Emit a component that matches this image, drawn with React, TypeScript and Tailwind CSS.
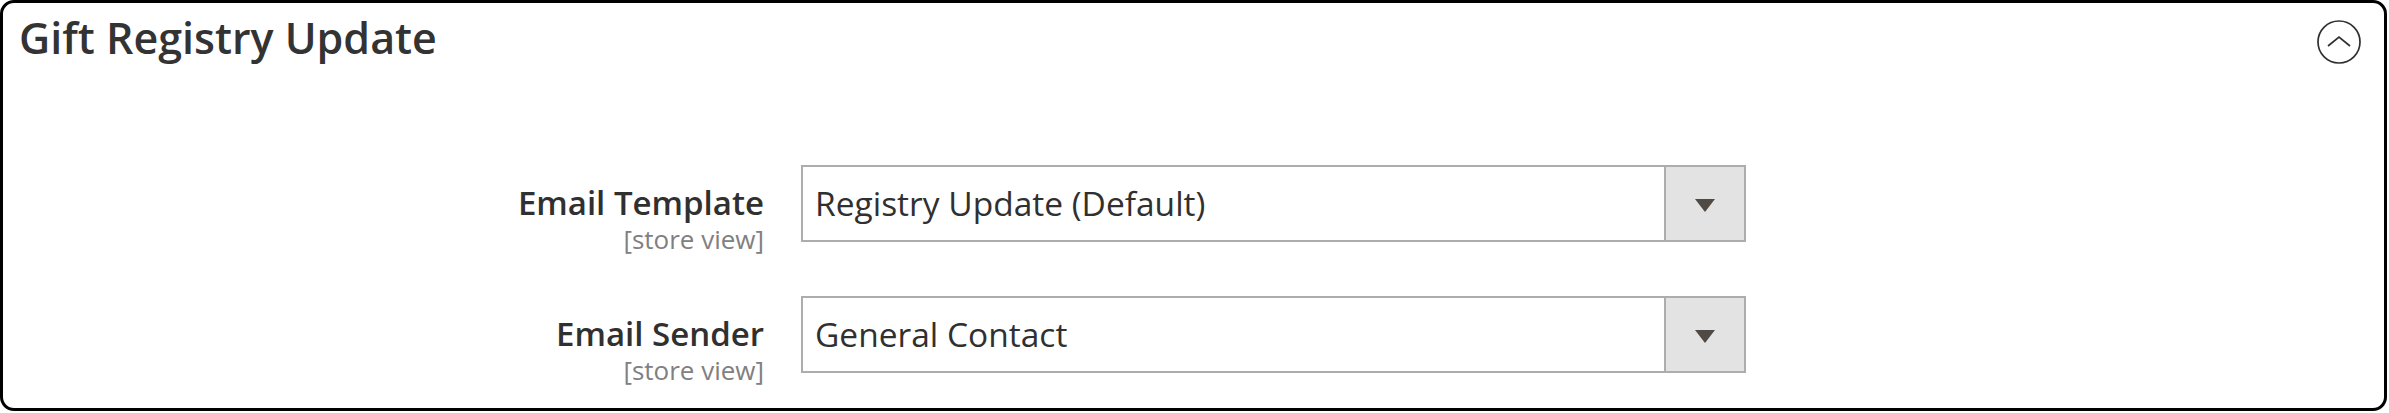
import React from 'react';

const rows = [
  { label: 'Email Template', value: 'Registry Update (Default)' },
  { label: 'Email Sender', value: 'General Contact' },
];

function SelectBox({ value }: { value: string }) {
  return (
    <div className="flex h-[77px] w-[945px] border-2 border-[#adadad] bg-white">
      <div className="flex flex-1 items-center pl-[12px] text-[33.5px] text-[#303030]">{value}</div>
      <div className="flex w-[80px] items-center justify-center border-l-2 border-[#adadad] bg-[#e3e3e3]">
        <svg width="20" height="13" viewBox="0 0 20 13" className="mt-[3px]">
          <polygon points="0,0 20,0 10,13" fill="#514943" />
        </svg>
      </div>
    </div>
  );
}

export default function App() {
  return (
    <div className="h-[413px] w-[2389px] bg-white" style={{ fontFamily: '"Open Sans", sans-serif' }}>
      <div className="flex h-[411px] w-[2387px] flex-col rounded-[14px] border-[3px] border-black bg-white">
        {/* Header */}
        <div className="flex h-[62px] items-start justify-between">
          <h2 className="pl-[16px] pt-[11px] text-[43px] font-semibold leading-[48px] text-[#333333]">
            Gift Registry Update
          </h2>
          <svg width="44" height="44" viewBox="0 0 44 44" className="mr-[23px] mt-[17px]">
            <circle cx="22" cy="22" r="21" fill="none" stroke="#303030" strokeWidth="1.7" />
            <polyline points="11,26 22,17 33,26" fill="none" stroke="#303030" strokeWidth="1.7" />
          </svg>
        </div>

        {/* Fields */}
        <div className="flex flex-col gap-[54px] pt-[100px]">
          {rows.map((row) => (
            <div key={row.label} className="flex h-[77px] items-start">
              <div className="flex w-[761px] flex-col items-end pt-[18px]">
                <span className="text-[33px] font-semibold leading-[40px] text-[#303030]">{row.label}</span>
                <span className="mt-[1px] text-[26px] leading-[30px] text-[#808080]">[store view]</span>
              </div>
              <div className="ml-[37px]">
                <SelectBox value={row.value} />
              </div>
            </div>
          ))}
        </div>
      </div>
    </div>
  );
}
